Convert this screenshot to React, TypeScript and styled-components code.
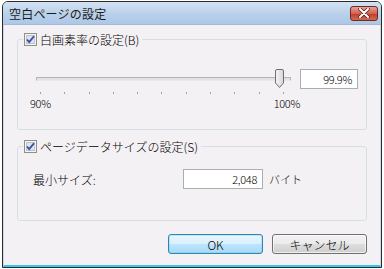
import React from "react";
import styled, { createGlobalStyle } from "styled-components";

const Global = createGlobalStyle`
  html, body { margin: 0; padding: 0; background: #ffffff; }
  body { font-family: "Noto Sans CJK JP", "DejaVu Sans", sans-serif; font-size: 12px; font-weight: 300; color: #000; }
  * { box-sizing: border-box; }
`;

const Window = styled.div`
  margin: 1px 0 0 2px;
  width: 380px;
  height: 267px;
  border: 1px solid #2b2b2b;
  border-radius: 6px 6px 0 0;
  display: flex;
  flex-direction: column;
  overflow: hidden;
  background: #f4f1f4;
`;

const TitleBar = styled.div`
  height: 23px;
  flex: none;
  display: flex;
  align-items: center;
  justify-content: space-between;
  padding: 0 3px 0 6px;
  background: linear-gradient(#d3e2f3, #b9d0ea 55%, #adc7e6);
  border-bottom: 1px solid #9fb9d6;
`;

const Title = styled.span`
  font-size: 12px;
  font-weight: 400;
  letter-spacing: 0.2px;
  color: #1a1a1a;
`;

const CloseButton = styled.div`
  width: 28px;
  height: 15px;
  border: 1px solid #6b2a24;
  border-radius: 3px;
  background: linear-gradient(#e9a295, #d2614f 50%, #c13d2a 51%, #cf6a52);
  display: flex;
  align-items: center;
  justify-content: center;
`;

const Client = styled.div`
  flex: 1;
  display: flex;
  flex-direction: column;
  padding: 8px 13px 0 13px;
  border-left: 1px solid #c6d9ef;
  border-right: 1px solid #c6d9ef;
  border-bottom: 2px solid #3cc6e9;
`;

const Group = styled.fieldset<{ $h: number; $gap?: number }>`
  margin: ${(p) => p.$gap ?? 0}px 0 0 0;
  height: ${(p) => p.$h}px;
  border: 1px solid #d5dfe5;
  border-radius: 3px;
  padding: 0;
  position: relative;
`;

const Legend = styled.legend`
  margin-left: 5px;
  padding: 0 3px 0 1px;
  display: flex;
  align-items: center;
  gap: 3px;
  font-size: 12px;
  line-height: 13px;
`;

const SliderRow = styled.div`
  display: flex;
  align-items: flex-start;
  padding: 23px 0 0 18px;
`;

const SliderArea = styled.div`
  width: 256px;
  display: flex;
  flex-direction: column;
`;

const TrackWrap = styled.div`
  height: 20px;
  display: flex;
  align-items: center;
  position: relative;
`;

const Track = styled.div`
  width: 255px;
  height: 4px;
  border: 1px solid #b5b5b5;
  border-bottom-color: #e8e8e8;
  background: #e2e2e2;
  border-radius: 1px;
`;

const Thumb = styled.svg`
  position: absolute;
  left: 238px;
  top: 0;
`;

const Ticks = styled.div`
  display: flex;
  justify-content: space-between;
  width: 244px;
  margin: 3px 0 0 4px;
`;

const Tick = styled.span`
  width: 1px;
  height: 2px;
  background: #a0a0a0;
`;

const Labels = styled.div`
  display: flex;
  justify-content: space-between;
  width: 270px;
  margin: 3px 0 0 -6px;
  font-size: 11px;
  line-height: 12px;
  letter-spacing: -0.3px;
`;

const Edit = styled.div<{ $w: number }>`
  width: ${(p) => p.$w}px;
  height: 20px;
  background: #fff;
  border: 1px solid #abadb3;
  display: flex;
  align-items: center;
  justify-content: flex-end;
  padding-right: 5px;
  font-size: 11px;
  letter-spacing: -0.3px;
`;

const SizeRow = styled.div`
  display: flex;
  align-items: center;
  padding: 16px 0 0 15px;
`;

const SizeLabel = styled.span`
  width: 150px;
  font-size: 12px;
`;

const Unit = styled.span`
  margin-left: 6px;
  font-size: 11px;
`;

const ButtonRow = styled.div`
  display: flex;
  justify-content: flex-end;
  gap: 9px;
  margin-top: 13px;
`;

const Button = styled.div<{ $default?: boolean }>`
  width: 95px;
  height: 20px;
  border: 1px solid ${(p) => (p.$default ? "#3c7fb1" : "#707070")};
  border-radius: 3px;
  display: flex;
  align-items: center;
  justify-content: center;
  font-size: 12px;
  background: ${(p) =>
    p.$default
      ? "linear-gradient(#eaf6fd, #d9f0fc 50%, #bee6fd 51%, #a7d9f5)"
      : "linear-gradient(#f2f2f2, #ebebeb 50%, #dddddd 51%, #cfcfcf)"};
  box-shadow: inset 0 0 0 1px ${(p) => (p.$default ? "#48d8fb55" : "#ffffffaa")};
`;

const Check = () => (
  <svg width="13" height="13" viewBox="0 0 13 13">
    <rect x="0.5" y="0.5" width="12" height="12" fill="#f4f4f4" stroke="#8e8f8f" />
    <rect x="2.5" y="2.5" width="8" height="8" fill="#dfe3e8" stroke="#c0c4ca" />
    <path d="M3 6.5 L5.2 9 L10 3.2" fill="none" stroke="#2e4ea8" strokeWidth="1.8" />
  </svg>
);

export default function App() {
  return (
    <>
      <Global />
      <Window>
        <TitleBar>
          <Title>空白ページの設定</Title>
          <CloseButton>
            <svg width="12" height="10" viewBox="0 0 12 10">
              <path d="M2 1 L10 9 M10 1 L2 9" stroke="#4a1a14" strokeWidth="3.4" strokeLinecap="round" />
              <path d="M2 1 L10 9 M10 1 L2 9" stroke="#ffffff" strokeWidth="2" strokeLinecap="round" />
            </svg>
          </CloseButton>
        </TitleBar>
        <Client>
          <Group $h={97}>
            <Legend>
              <Check />
              <span>白画素率の設定(B)</span>
            </Legend>
            <SliderRow>
              <SliderArea>
                <TrackWrap>
                  <Track />
                  <Thumb width="11" height="20" viewBox="0 0 11 20">
                    <defs>
                      <linearGradient id="tg" x1="0" y1="0" x2="1" y2="0">
                        <stop offset="0" stopColor="#f6f6f6" />
                        <stop offset="1" stopColor="#d6d6d6" />
                      </linearGradient>
                    </defs>
                    <path d="M1.5 2 Q1.5 0.5 3 0.5 L8 0.5 Q9.5 0.5 9.5 2 L9.5 14 L5.5 18.5 L1.5 14 Z" fill="url(#tg)" stroke="#6f6f6f" />
                  </Thumb>
                </TrackWrap>
                <Ticks>
                  {Array.from({ length: 11 }).map((_, i) => (
                    <Tick key={i} />
                  ))}
                </Ticks>
                <Labels>
                  <span>90%</span>
                  <span>100%</span>
                </Labels>
              </SliderArea>
              <Edit $w={58} style={{ marginLeft: 8 }}>99.9%</Edit>
            </SliderRow>
          </Group>
          <Group $h={81} $gap={10}>
            <Legend>
              <Check />
              <span>ページデータサイズの設定(S)</span>
            </Legend>
            <SizeRow>
              <SizeLabel>最小サイズ:</SizeLabel>
              <Edit $w={80}>2,048</Edit>
              <Unit>バイト</Unit>
            </SizeRow>
          </Group>
          <ButtonRow>
            <Button $default>OK</Button>
            <Button>キャンセル</Button>
          </ButtonRow>
        </Client>
      </Window>
    </>
  );
}
